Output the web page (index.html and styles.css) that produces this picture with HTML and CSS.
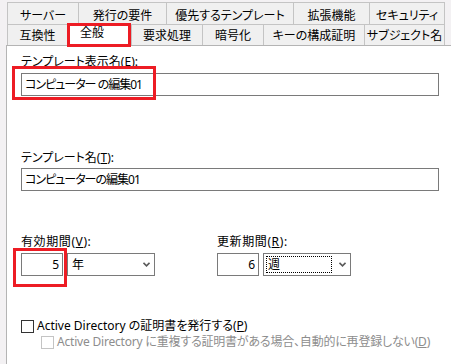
FILE: index.html
```html
<!DOCTYPE html>
<html lang="ja">
<head>
    <meta charset="UTF-8">
    <title>プロパティ</title>
    <link rel="stylesheet" href="styles.css">
</head>
<body>
    <div class="tabs">
        <div class="tab-row top">
            <div class="tab">サーバー</div>
            <div class="tab">発行の要件</div>
            <div class="tab">優先するテンプレート</div>
            <div class="tab">拡張機能</div>
            <div class="tab">セキュリティ</div>
        </div>
        <div class="tab-row bottom">
            <div class="tab">互換性</div>
            <div class="tab active">全般</div>
            <div class="tab">要求処理</div>
            <div class="tab">暗号化</div>
            <div class="tab">キーの構成証明</div>
            <div class="tab">サブジェクト名</div>
        </div>
    </div>

    <div class="panel">
        <div class="label">テンプレート表示名(<u>E</u>):</div>
        <div class="textbox">コンピューター の編集01</div>

        <div class="label gap-name">テンプレート名(<u>T</u>):</div>
        <div class="textbox near">コンピューターの編集01</div>

        <div class="period-row">
            <div class="period">
                <div class="label">有効期間(<u>V</u>):</div>
                <div class="period-inputs">
                    <div class="numbox">5</div>
                    <div class="combo">
                        <span class="combo-text">年</span>
                        <svg class="chevron" width="7" height="5" viewBox="0 0 7 5"><polyline points="0.5,0.8 3.5,3.8 6.5,0.8" fill="none" stroke="#5a5a5a" stroke-width="1.6"/></svg>
                    </div>
                </div>
            </div>
            <div class="period">
                <div class="label">更新期間(<u>R</u>):</div>
                <div class="period-inputs">
                    <div class="numbox">6</div>
                    <div class="combo">
                        <span class="combo-text focused">週</span>
                        <svg class="chevron" width="7" height="5" viewBox="0 0 7 5"><polyline points="0.5,0.8 3.5,3.8 6.5,0.8" fill="none" stroke="#5a5a5a" stroke-width="1.6"/></svg>
                    </div>
                </div>
            </div>
        </div>

        <div class="check">
            <span class="box"></span>
            <span>Active Directory の証明書を発行する(<u>P</u>)</span>
        </div>
        <div class="check sub disabled">
            <span class="box"></span>
            <span>Active Directory に重複する証明書がある場合、自動的に再登録しない(<u>D</u>)</span>
        </div>

        <!-- red highlight marks -->
        <div class="mark mark-name"></div>
        <div class="mark mark-valid"></div>
    </div>
</body>
</html>
```

FILE: styles.css
```css
* {
    box-sizing: border-box;
}

body {
    margin: 0;
    padding-top: 2px;
    height: 364px;
    overflow: hidden;
    background: #f3f1f3;
    font-family: "Noto Sans", "Noto Sans CJK JP", sans-serif;
    font-size: 12px;
    line-height: 14px;
    color: #000;
}

u {
    text-decoration: underline;
}

/* tabs */
.tabs {
    margin-left: 7px;
    width: 438px;
}

.tab-row {
    display: grid;
}

.tab-row.top {
    grid-template-columns: 71px 88px 127px 76px 76px;
    height: 22px;
}

.tab-row.bottom {
    grid-template-columns: 60px 64px 71px 61px 101px 81px;
    height: 21px;
}

.tab {
    display: flex;
    align-items: center;
    justify-content: center;
    white-space: nowrap;
    background: #f0f0f0;
    border-left: 1px solid #c4c4c4;
    border-top: 1px solid #c4c4c4;
    font-feature-settings: "palt";
}

.tab-row.top .tab {
    padding-top: 4px;
}

.tab:last-child {
    border-right: 1px solid #c4c4c4;
}

.tab.active {
    position: relative;
    z-index: 1;
    margin: -1px 0 -1px 0;
    background: #fff;
    border: 3px solid #ed1c24;
    padding: 0 14px 4px 0;
}

/* page */
.panel {
    position: relative;
    margin-left: 6px;
    height: 320px;
    padding: 9px 0 0 14px;
    background: #fff;
    border-left: 1px solid #b4b4b4;
    border-top: 1px solid #b4b4b4;
}

.label {
    height: 14px;
    white-space: nowrap;
    font-feature-settings: "palt";
}

.gap-name {
    margin-top: 55px;
}

.textbox {
    margin-top: 4px;
    width: 418px;
    height: 23px;
    padding-left: 3px;
    display: flex;
    align-items: center;
    border: 1px solid #7a7a7a;
    white-space: nowrap;
    letter-spacing: -1px;
    font-feature-settings: "palt";
}

.textbox.near {
    margin-top: 3px;
}

.period-row {
    margin-top: 44px;
    display: grid;
    grid-template-columns: 196px auto;
}

.period .label {
    letter-spacing: 0.6px;
}

.period-inputs {
    margin-top: 4px;
    display: flex;
    gap: 4px;
}

.numbox {
    width: 42px;
    height: 23px;
    padding-right: 3px;
    display: flex;
    align-items: center;
    justify-content: flex-end;
    border: 1px solid #7a7a7a;
}

.combo {
    width: 88px;
    height: 23px;
    padding: 2px 3px 2px 2px;
    display: flex;
    align-items: center;
    justify-content: space-between;
    border: 1px solid #7a7a7a;
}

.combo-text {
    padding-left: 2px;
}

.combo-text.focused {
    width: 66px;
    height: 17px;
    padding-left: 1px;
    display: flex;
    align-items: center;
    border: 1px dotted #000;
}

.chevron {
    margin-right: 1px;
}

/* check boxes */
.check {
    margin-top: 43px;
    display: flex;
    align-items: center;
    gap: 3px;
    white-space: nowrap;
    font-feature-settings: "palt";
}

.check .box {
    width: 13px;
    height: 13px;
    border: 1px solid #333;
    background: #fff;
}

.check.sub {
    margin-top: 2px;
    padding-left: 20px;
    letter-spacing: -0.2px;
}

.check.disabled {
    color: #8d8d8d;
}

.check.disabled .box {
    border-color: #c4c4c4;
}

/* annotation frames */
.mark {
    position: absolute;
    border: 3px solid #ed1c24;
}

.mark-name {
    left: 5px;
    top: 20px;
    width: 144px;
    height: 34px;
}

.mark-valid {
    left: 6px;
    top: 202px;
    width: 54px;
    height: 39px;
}
```
